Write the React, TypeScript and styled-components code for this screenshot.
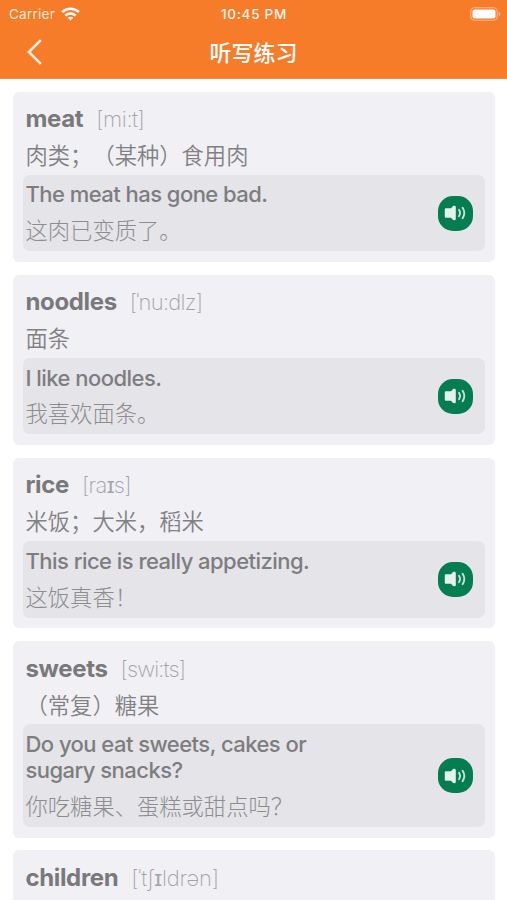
import React from "react";
import styled, { createGlobalStyle } from "styled-components";

const GlobalStyle = createGlobalStyle`
  * { box-sizing: border-box; }
  html, body { margin: 0; background: #fff; }
  body { overflow: hidden; font-family: Inter, "Noto Sans CJK SC", sans-serif; text-spacing-trim: space-all; }
  button { font: inherit; }
`;

const Screen = styled.div`
  width: 507px;
  height: 900px;
  overflow: hidden;
  background: #fff;
`;

const Header = styled.header`
  height: 79px;
  background: #f77c2a;
  color: #fff;
  border-bottom: 1px solid #f58a43;
`;

const StatusBar = styled.div`
  display: grid;
  grid-template-columns: 1fr auto 1fr;
  align-items: center;
  height: 27px;
  padding: 0 5px 0 9px;
`;

const Carrier = styled.div`
  display: flex;
  align-items: center;
  gap: 6px;
  font-size: 13.5px;
  letter-spacing: 0.25px;
  color: #ffe9da;
`;

const Clock = styled.div`
  margin-right: 3px;
  font-size: 13.5px;
  font-weight: 550;
  letter-spacing: 0.75px;
  color: #fff3ea;
`;

const BatterySlot = styled.div`
  display: flex;
  justify-content: flex-end;
`;

const NavBar = styled.div`
  display: grid;
  grid-template-columns: 60px 1fr 60px;
  align-items: center;
  height: 51px;
`;

const BackButton = styled.button`
  display: flex;
  padding: 0 0 2px 26px;
  border: 0;
  background: none;
  color: #fff3e6;
`;

const Title = styled.h1`
  margin: 0;
  text-align: center;
  font-size: 22px;
  line-height: 30px;
  font-weight: 500;
`;

const WordList = styled.main`
  display: flex;
  flex-direction: column;
  gap: 12.6px;
  padding: 12.5px 12.5px 0 13.3px;
`;

const Card = styled.article`
  flex: none;
  min-height: 80px;
  padding: 11.6px 10px 10.8px 9.7px;
  border-radius: 6px;
  background: #f1f0f5;
`;

const Heading = styled.div`
  display: flex;
  align-items: baseline;
  gap: 13px;
  height: 31px;
  padding-left: 2.5px;
  line-height: 31.4px;
`;

const Word = styled.span`
  font-size: 24px;
  font-weight: 700;
  letter-spacing: -0.36px;
  color: #79797b;
`;

const Phonetic = styled.span<{ $spacing: number }>`
  font-size: 22px;
  font-weight: 250;
  letter-spacing: ${(p) => p.$spacing}px;
  color: #a3a3a6;
`;

const Definition = styled.p`
  margin: 0;
  height: 40.8px;
  padding-left: 2.5px;
  font-size: 22.3px;
  font-weight: 350;
  line-height: 43.2px;
  color: #818183;
`;

const Example = styled.section`
  display: flex;
  align-items: center;
  justify-content: space-between;
  padding: 6.5px 12px 4px 2.5px;
  border-radius: 7px;
  background: #e5e4e9;
`;

const Sentence = styled.p`
  margin: 0;
  font-size: 22px;
  font-weight: 500;
  line-height: 26.2px;
  letter-spacing: -0.54px;
  white-space: pre-line;
  color: #7d7d7f;
`;

const Translation = styled.p`
  margin: 7.7px 0 0;
  font-size: 22.3px;
  font-weight: 300;
  line-height: 32px;
  color: #8d8d90;
`;

const SpeakButton = styled.button`
  display: flex;
  align-items: center;
  justify-content: center;
  width: 35px;
  height: 35px;
  margin-bottom: 2.4px;
  padding: 0;
  border: 0;
  border-radius: 15px;
  background: #047d50;
`;

const WifiIcon = () => (
  <svg width="19" height="14" viewBox="0 0 19 14" fill="none" stroke="#fff" strokeWidth="2.5">
    <path d="M1.2 5.2C5.8.7 13.2.7 17.8 5.2M4.4 8.6c2.9-2.7 7.3-2.7 10.2 0" />
    <path d="M6.8 10.8c1.5-1.3 3.9-1.3 5.4 0L9.5 13.5z" fill="#fff" stroke="none" />
  </svg>
);

const BatteryIcon = () => (
  <svg width="32" height="14" viewBox="0 0 32 14">
    <rect x=".8" y=".8" width="26.4" height="12.4" rx="3.8" fill="none" stroke="#fbb88b" strokeWidth="1.1" />
    <rect x="2.5" y="2.5" width="23" height="9" rx="2" fill="#fff" />
    <path d="M28.8 4.7c2 .6 2 4 0 4.6z" fill="#fbb88b" />
  </svg>
);

const ChevronIcon = () => (
  <svg width="18" height="26" viewBox="0 0 18 26" fill="none" stroke="currentColor" strokeWidth="2.5">
    <path d="M14.8 1.2 2.8 13l12 11.8" />
  </svg>
);

const SpeakerIcon = () => (
  <svg width="22" height="18" viewBox="0 0 22 18" fill="none">
    <path
      d="M2.2 4.2H7L8.8 2.2c1-.8 3-.3 3 .9v11.8c0 1.2-2 1.7-3 .9L7 13.8H2.2c-.9 0-1.4-.5-1.4-1.3V5.5c0-.8.5-1.3 1.4-1.3z"
      fill="#e6f0ed"
    />
    <path d="M15 5.8c1.3 1.9 1.3 4.5 0 6.4" stroke="#c5e1d7" strokeWidth="1.8" strokeLinecap="round" />
    <path d="M18.6 3.8c2.1 3.2 2.1 7.2 0 10.4" stroke="#c5e1d7" strokeWidth="1.9" strokeLinecap="round" />
  </svg>
);

interface Entry {
  word: string;
  phonetic: string;
  phoneticSpacing: number;
  definition?: string;
  sentence?: string;
  translation?: string;
}

const entries: Entry[] = [
  { word: "meat", phonetic: "[mi:t]", phoneticSpacing: -0.4, definition: "肉类；（某种）食用肉", sentence: "The meat has gone bad.", translation: "这肉已变质了。" },
  { word: "noodles", phonetic: "[ˈnu:dlz]", phoneticSpacing: -0.75, definition: "面条", sentence: "I like noodles.", translation: "我喜欢面条。" },
  { word: "rice", phonetic: "[raɪs]", phoneticSpacing: -0.65, definition: "米饭；大米，稻米", sentence: "This rice is really appetizing.", translation: "这饭真香！" },
  { word: "sweets", phonetic: "[swi:ts]", phoneticSpacing: -0.85, definition: "（常复）糖果", sentence: "Do you eat sweets, cakes or\nsugary snacks?", translation: "你吃糖果、蛋糕或甜点吗？" },
  { word: "children", phonetic: "[ˈtʃɪldrən]", phoneticSpacing: -0.2 },
];

const WordCard = ({ entry }: { entry: Entry }) => (
  <Card>
    <Heading>
      <Word>{entry.word}</Word>
      <Phonetic $spacing={entry.phoneticSpacing}>{entry.phonetic}</Phonetic>
    </Heading>
    {entry.definition && <Definition>{entry.definition}</Definition>}
    {entry.sentence && (
      <Example>
        <div>
          <Sentence>{entry.sentence}</Sentence>
          <Translation>{entry.translation}</Translation>
        </div>
        <SpeakButton aria-label="播放">
          <SpeakerIcon />
        </SpeakButton>
      </Example>
    )}
  </Card>
);

export default function App() {
  return (
    <Screen>
      <GlobalStyle />
      <Header>
        <StatusBar>
          <Carrier>
            <span>Carrier</span>
            <WifiIcon />
          </Carrier>
          <Clock>10:45 PM</Clock>
          <BatterySlot>
            <BatteryIcon />
          </BatterySlot>
        </StatusBar>
        <NavBar>
          <BackButton aria-label="返回">
            <ChevronIcon />
          </BackButton>
          <Title>听写练习</Title>
        </NavBar>
      </Header>
      <WordList>
        {entries.map((entry) => (
          <WordCard key={entry.word} entry={entry} />
        ))}
      </WordList>
    </Screen>
  );
}
